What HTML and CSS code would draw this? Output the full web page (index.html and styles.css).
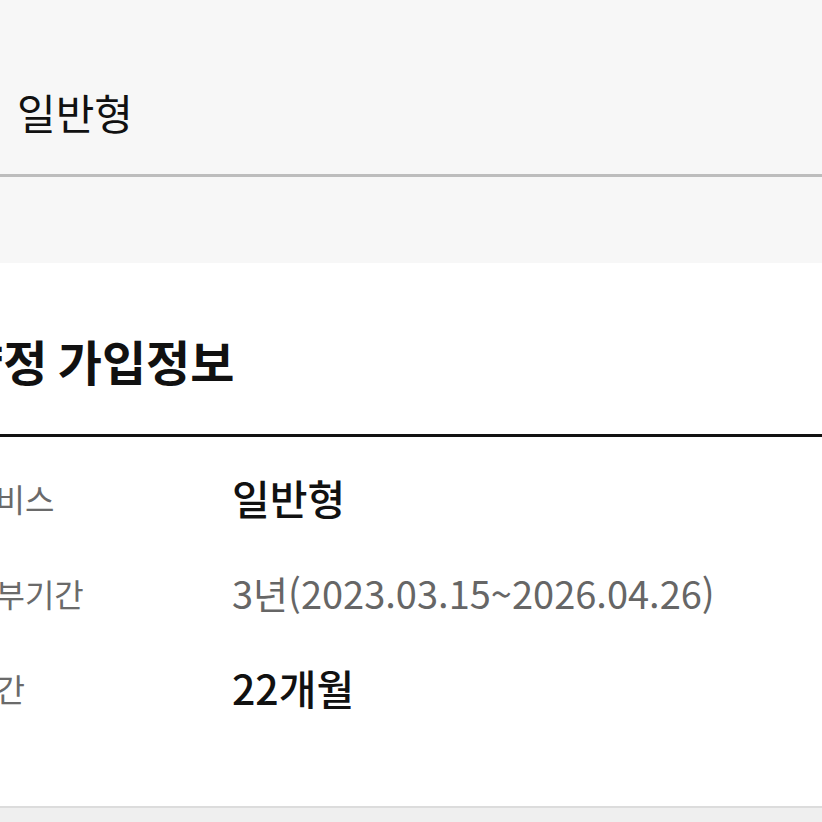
FILE: index.html
```html
<!DOCTYPE html>
<html lang="ko">
<head>
<meta charset="utf-8">
<link rel="stylesheet" href="styles.css">
</head>
<body>
<div class="page">
  <div class="top">
    <div class="top-value">일반형</div>
  </div>
  <div class="gap"></div>
  <section class="info">
    <h2 class="title">약정 가입정보</h2>
    <div class="rows">
      <div class="row">
        <div class="label">서비스</div>
        <div class="value strong">일반형</div>
      </div>
      <div class="row">
        <div class="label">할부기간</div>
        <div class="value muted">3년(2023.03.15~2026.04.26)</div>
      </div>
      <div class="row">
        <div class="label">기간</div>
        <div class="value strong">22개월</div>
      </div>
    </div>
  </section>
  <div class="bottom"></div>
</div>
</body>
</html>
```
FILE: styles.css
```css
* { box-sizing: border-box; }
html, body {
  margin: 0;
  padding: 0;
  width: 822px;
  height: 822px;
  overflow: hidden;
  background: #fff;
  font-family: "Noto Sans CJK KR", "Noto Sans", sans-serif;
}
.page {
  display: flex;
  flex-direction: column;
  height: 822px;
}
.top {
  height: 177px;
  background: #f7f7f7;
  border-bottom: 3px solid #bdbdbd;
  display: flex;
  align-items: flex-start;
  padding-left: 17px;
  padding-top: 91px;
}
.top-value {
  font-size: 42px;
  color: #111;
  line-height: 1;
}
.gap {
  height: 86px;
  background: #f7f7f7;
}
.info {
  flex: 1;
  background: #fff;
  display: flex;
  flex-direction: column;
}
.title {
  margin: 0 0 0 -41px;
  font-size: 48px;
  font-weight: 700;
  color: #111;
  line-height: 1;
  padding-top: 73px;
  padding-bottom: 50px;
  border-bottom: 3px solid #111;
  word-spacing: -3px;
}
.rows {
  display: flex;
  flex-direction: column;
  padding-top: 13px;
}
.row {
  display: flex;
  align-items: center;
  height: 95px;
}
.label {
  width: 266px;
  margin-left: -34px;
  flex: 0 0 auto;
  font-size: 32px;
  color: #6a6a6a;
  line-height: 1;
}
.value {
  font-size: 41px;
  line-height: 1;
}
.strong { color: #111; font-weight: 500; }
.muted { color: #666; font-size: 38px; }
.bottom {
  height: 16px;
  background: #efefef;
  border-top: 2px solid #dcdcdc;
}
```
